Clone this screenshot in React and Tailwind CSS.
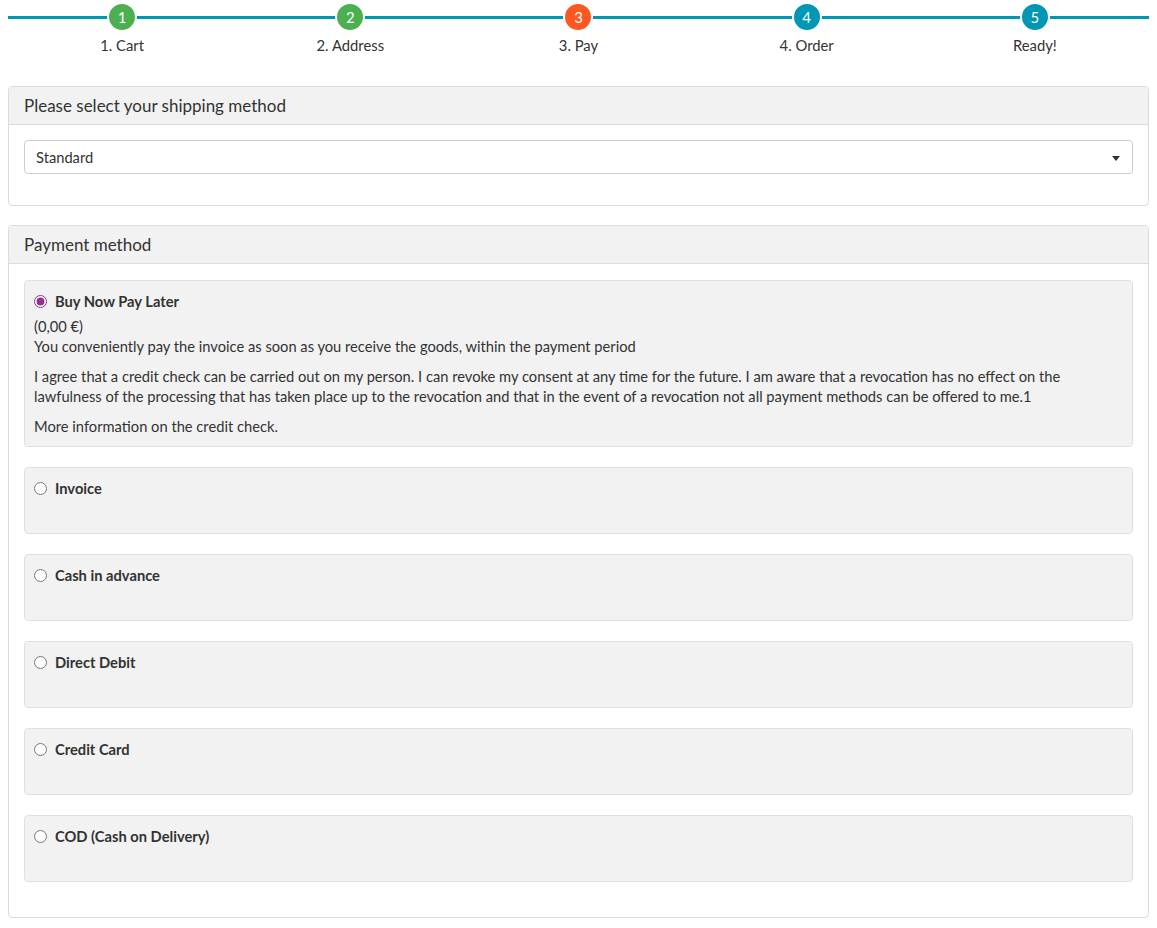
import React, { useState } from 'react';

const steps = [
  { n: 1, label: '1. Cart', color: 'bg-[#4caf50]' },
  { n: 2, label: '2. Address', color: 'bg-[#4caf50]' },
  { n: 3, label: '3. Pay', color: 'bg-[#ff5722]' },
  { n: 4, label: '4. Order', color: 'bg-[#0097b5]' },
  { n: 5, label: 'Ready!', color: 'bg-[#0097b5]' },
];

const methods = [
  'Invoice',
  'Cash in advance',
  'Direct Debit',
  'Credit Card',
  'COD (Cash on Delivery)',
];

// stepper across the top
const Stepper = () => (
  <div className="relative grid grid-cols-5 pt-1">
    <div className="absolute left-0 right-0 top-[16px] h-[3px] bg-[#0097b5]" />
    {steps.map((s) => (
      <div key={s.n} className="relative flex flex-col items-center">
        <div
          className={`${s.color} w-[26px] h-[26px] rounded-full border-2 border-white box-content -mt-[2px] flex items-center justify-center text-white text-[15px] leading-none`}
        >
          {s.n}
        </div>
        <div className="mt-[3px] text-[14.8px] leading-5 text-[#333]">{s.label}</div>
      </div>
    ))}
  </div>
);

const Panel = ({ title, children, className = '' }) => (
  <div className={`border border-[#dcdcdc] rounded bg-white ${className}`}>
    <div className="bg-[#f2f2f2] border-b border-[#dcdcdc] rounded-t px-[15px] h-[38px] flex items-center text-[17px] text-[#333]">
      {title}
    </div>
    {children}
  </div>
);

const App = () => {
  const [method, setMethod] = useState('bnpl');

  return (
    <div
      className="min-h-screen bg-white px-2 pb-3 text-[#333]"
      style={{ fontFamily: 'Lato, "Noto Sans", sans-serif' }}
    >
      <Stepper />

      <Panel title="Please select your shipping method" className="mt-[31px]">
        <div className="px-[15px] pt-[15px] pb-[31px]">
          <div className="relative h-[34px] border border-[#ccc] rounded flex items-center pl-[11px] text-[14.7px]">
            Standard
            <span className="absolute right-[12px] top-[15px] w-0 h-0 border-l-[4px] border-r-[4px] border-t-[5px] border-l-transparent border-r-transparent border-t-[#333]" />
          </div>
        </div>
      </Panel>

      <Panel title="Payment method" className="mt-[19px]">
        <div className="px-[15px] pt-[16px] pb-[35px] flex flex-col gap-[20px] text-[14.7px] leading-5">
          <div className="bg-[#f2f2f2] border border-[#e0e0e0] rounded px-[9px] pt-[10px] pb-[10px]">
            <label className="flex items-center gap-[8px] font-bold">
              <input
                type="radio"
                name="pay"
                checked={method === 'bnpl'}
                onChange={() => setMethod('bnpl')}
                className="w-[13px] h-[13px] m-0 accent-[#93328e]"
              />
              Buy Now Pay Later
            </label>
            <div className="mt-[5px]">(0,00 €)</div>
            <div>You conveniently pay the invoice as soon as you receive the goods, within the payment period</div>
            <p className="mt-[10px]">
              I agree that a credit check can be carried out on my person. I can revoke my consent at any time for the future. I am aware that a revocation has no effect on the lawfulness of the processing that has taken place up to the revocation and that in the event of a revocation not all payment methods can be offered to me.1
            </p>
            <p className="mt-[10px]">More information on the credit check.</p>
          </div>

          {methods.map((m) => (
            <div key={m} className="bg-[#f2f2f2] border border-[#e0e0e0] rounded px-[9px] pt-[10px] min-h-[67px]">
              <label className="flex items-center gap-[8px] font-bold">
                <input
                  type="radio"
                  name="pay"
                  checked={method === m}
                  onChange={() => setMethod(m)}
                  className="w-[13px] h-[13px] m-0 accent-[#93328e]"
                />
                {m}
              </label>
            </div>
          ))}
        </div>
      </Panel>
    </div>
  );
};

export default App;
